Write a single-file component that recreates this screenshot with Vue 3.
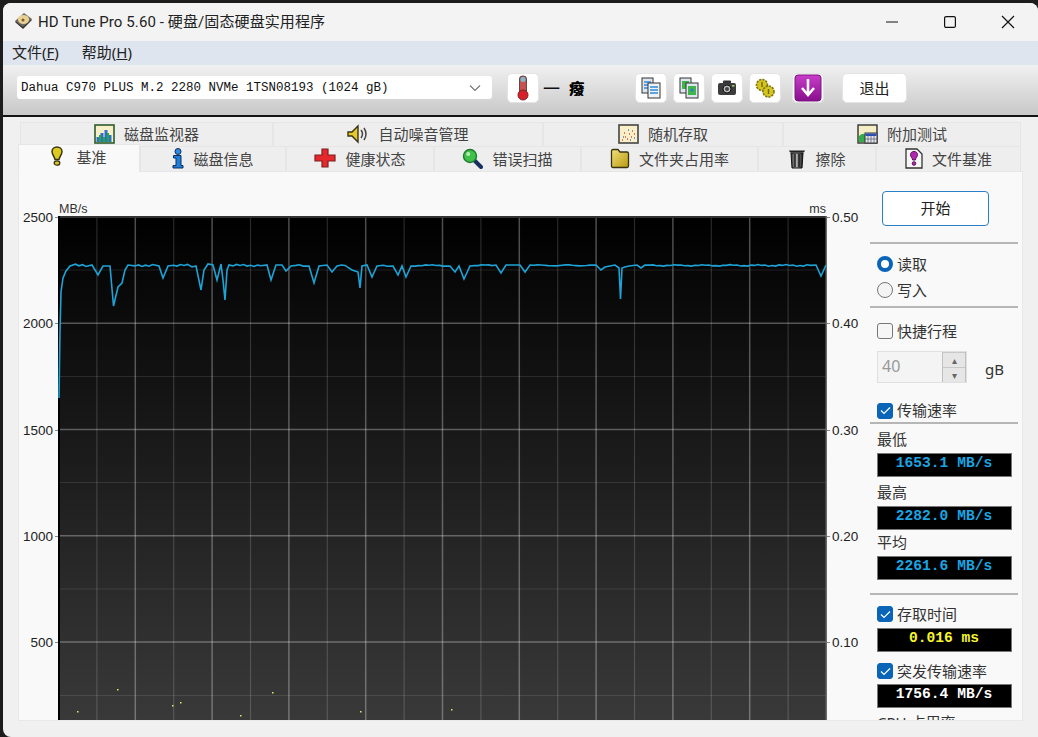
<script setup>
const hMajor = [217, 323.25, 429.5, 535.75, 642]
const hMinor = [270, 376.5, 482.5, 589, 695.5]
const vLines = []
for (let i = 1; i < 20; i++) {
  vLines.push({ x: 58.5 + i * 38.4, major: i % 2 === 0 })
}

// places where the read speed falls away from the flat line
const dips = [
  [59, 398], [60, 330], [61, 292], [63, 278], [66, 271], [70, 266],
  [92, 265], [98, 275], [103, 266], [110, 266], [113.5, 306], [118, 287], [122, 283], [125, 270], [128, 265],
  [159, 266], [163, 278], [168, 266],
  [192, 267], [196, 266], [201, 290], [204, 270], [208, 264], [213, 265], [217, 280], [221, 264], [223, 280], [225, 300], [227, 270], [229, 265],
  [267, 265], [271, 280], [276, 265], [282, 265], [286, 271], [291, 266],
  [309, 266], [314, 283], [319, 266], [327, 265], [332, 272], [337, 266],
  [352, 270], [355, 271], [358, 272], [360, 288], [362, 266], [367, 265], [372, 277], [377, 266],
  [393, 266], [398, 275], [402, 266], [406, 277], [411, 266],
  [450, 266], [455, 272], [459, 266], [464, 279], [470, 266],
  [496, 265], [501, 273], [506, 265], [520, 265], [525, 272], [530, 265],
  [596, 265], [601, 270], [605, 267], [615, 265], [619, 268], [620.5, 299], [622, 268], [625, 267], [629, 266], [637, 265], [641, 268], [645, 265],
  [816, 265], [821, 276], [826, 265]
]

function buildLine() {
  const pts = [...dips]
  for (let x = 72; x < 826; x += 3.5) {
    if (dips.some(d => Math.abs(d[0] - x) < 4)) continue
    const y = 265.4 + Math.sin(x * 0.9) * 0.8 + Math.sin(x * 0.23) * 0.5
    pts.push([x, +y.toFixed(1)])
  }
  pts.sort((a, b) => a[0] - b[0])
  return pts.map(p => p.join(',')).join(' ')
}
const speedLine = buildLine()

const dots = [[77, 711], [117, 689], [172, 705], [180, 702], [240, 715], [272, 692], [360, 711], [451, 709]]
const leftLabels = ['2500', '2000', '1500', '1000', '500']
const rightLabels = ['0.50', '0.40', '0.30', '0.20', '0.10']
</script>

<template>
  <div class="window">
    <div class="titlebar">
      <svg class="app-icon" width="19" height="18" viewBox="0 0 19 18">
        <polygon points="1,10 10,2 18,8 9,17" fill="#33312e" />
        <polygon points="1,9 10,1 18,7 9,15" fill="#6c6963" />
        <ellipse cx="9.5" cy="7.5" rx="5.6" ry="4.6" fill="#e8cf94" />
        <circle cx="9" cy="8" r="1.5" fill="#7a5c2c" />
      </svg>
      <span class="title-text">HD Tune Pro 5.60 - 硬盘/固态硬盘实用程序</span>
      <div class="win-controls">
        <span class="win-btn">
          <svg width="14" height="14" viewBox="0 0 14 14"><path d="M1 7h12" stroke="#111" stroke-width="1.2" /></svg>
        </span>
        <span class="win-btn">
          <svg width="14" height="14" viewBox="0 0 14 14"><rect x="1.6" y="1.6" width="10.8" height="10.8" rx="1.5" fill="none" stroke="#111" stroke-width="1.2" /></svg>
        </span>
        <span class="win-btn">
          <svg width="14" height="14" viewBox="0 0 14 14"><path d="M1 1l12 12M13 1L1 13" stroke="#111" stroke-width="1.2" /></svg>
        </span>
      </div>
    </div>

    <div class="menubar">
      <span class="menu-item">文件(<u>F</u>)</span>
      <span class="menu-item">帮助(<u>H</u>)</span>
    </div>

    <div class="toolbar">
      <div class="combo">
        <span class="combo-text">Dahua C970 PLUS M.2 2280 NVMe 1TSN08193 (1024 gB)</span>
        <svg width="12" height="8" viewBox="0 0 12 8"><path d="M1 1.5l5 5 5-5" fill="none" stroke="#777" stroke-width="1.2" /></svg>
      </div>
      <button class="tool-btn thermo">
        <svg width="18" height="26" viewBox="0 0 18 26">
          <rect x="5.500" y="1" width="7" height="18" rx="3" fill="#c9504e" stroke="#5c4a4a" />
          <rect x="6.500" y="2" width="5" height="5" rx="2" fill="#7fb8c8" />
          <circle cx="9" cy="20" r="5" fill="#d8202a" stroke="#7a2025" />
        </svg>
      </button>
      <span class="temp-dash">一</span>
      <span class="temp-glyph">癈</span>

      <button class="tool-btn first">
        <svg width="20" height="22" viewBox="0 0 20 22">
          <rect x="1" y="1" width="11" height="15" fill="#dfe6ee" stroke="#333" />
          <path d="M3 5h7M3 8h7M3 11h7" stroke="#2f8ad8" stroke-width="1.6" />
          <rect x="7" y="6" width="12" height="15" fill="#eef2f6" stroke="#333" />
          <path d="M9 10h8M9 13h8M9 16h8" stroke="#2f8ad8" stroke-width="1.6" />
        </svg>
      </button>
      <button class="tool-btn">
        <svg width="20" height="22" viewBox="0 0 20 22">
          <rect x="1" y="1" width="11" height="15" fill="#dfe6ee" stroke="#333" />
          <rect x="3" y="4" width="7" height="8" fill="#3fb54a" />
          <rect x="7" y="6" width="12" height="15" fill="#dfe6ee" stroke="#333" />
          <rect x="9" y="9" width="8" height="9" fill="#3fb54a" />
          <circle cx="13" cy="13" r="1.6" fill="#2f7ad8" />
        </svg>
      </button>
      <button class="tool-btn">
        <svg width="20" height="18" viewBox="0 0 20 18">
          <rect x="6" y="1.5" width="8" height="4" rx="1" fill="#333" />
          <rect x="1" y="4" width="18" height="12" rx="2" fill="#3c3c3c" />
          <circle cx="10" cy="10" r="4" fill="#bbb" stroke="#111" />
          <circle cx="10" cy="10" r="2" fill="#444" />
          <rect x="15" y="6" width="2.5" height="1.6" fill="#9ccf5f" />
        </svg>
      </button>
      <button class="tool-btn">
        <svg width="22" height="22" viewBox="0 0 22 22">
          <circle cx="8" cy="8" r="5.5" fill="#d6c51c" stroke="#7c7412" stroke-width="1.6" stroke-dasharray="2.2 1" />
          <circle cx="14.5" cy="14.5" r="5.5" fill="#d6c51c" stroke="#7c7412" stroke-width="1.6" stroke-dasharray="2.2 1" />
          <path d="M8 5v5M14.5 12v5" stroke="#6e6610" stroke-width="1.4" />
        </svg>
      </button>
      <button class="tool-btn save">
        <svg width="28" height="28" viewBox="0 0 28 28">
          <defs>
            <linearGradient id="purple" x1="0" y1="0" x2="0" y2="1">
              <stop offset="0" stop-color="#c93cc9" />
              <stop offset="1" stop-color="#86108c" />
            </linearGradient>
          </defs>
          <rect x="1" y="1" width="26" height="26" rx="3" fill="url(#purple)" stroke="#7a1280" />
          <path d="M14 5v15M8 14l6 7 6-7" fill="none" stroke="#fff" stroke-width="2.6" />
        </svg>
      </button>
      <button class="exit-btn">退出</button>
    </div>

    <div class="content">
      <div class="tabs-back">
        <div class="tab">
          <svg width="21" height="20" viewBox="0 0 21 20">
            <rect x="1" y="1" width="19" height="18" fill="#f7efc8" stroke="#2c5a2c" stroke-width="1.6" />
            <path d="M4 18v-5M8 18V9M12 18V6M16 18v-7" stroke="#2f6fd0" stroke-width="3" />
            <path d="M6 18v-7M10 18v-5M14 18V9" stroke="#28a838" stroke-width="2" />
          </svg>
          <span>磁盘监视器</span>
        </div>
        <div class="tab">
          <svg width="22" height="20" viewBox="0 0 22 20">
            <path d="M1 8h4l6-6v16l-6-6H1z" fill="#e8c92a" stroke="#3a3415" stroke-width="1.4" />
            <path d="M14 6q3 4 0 8M17 4q4 6 0 12" fill="none" stroke="#444" stroke-width="1.5" />
          </svg>
          <span>自动噪音管理</span>
        </div>
        <div class="tab">
          <svg width="21" height="20" viewBox="0 0 21 20">
            <rect x="1" y="1" width="19" height="18" fill="#f9efc9" stroke="#444" stroke-width="1.6" />
            <path d="M4 16h1M7 13h1M9 15h1M11 10h1M13 13h1M14 7h1M16 10h1M6 9h1" stroke="#d8503c" stroke-width="1.6" />
            <path d="M5 13h1M10 6h1M12 16h1M16 14h1" stroke="#3f7ad8" stroke-width="1.6" />
          </svg>
          <span>随机存取</span>
        </div>
        <div class="tab">
          <svg width="21" height="20" viewBox="0 0 21 20">
            <rect x="1" y="1" width="19" height="18" fill="#f5eec4" stroke="#333" stroke-width="1.4" />
            <path d="M2 18v-6q3-3 6-2v8z" fill="#2fae4a" />
            <rect x="8" y="9" width="12" height="10" fill="#e6e6f0" stroke="#333" />
            <rect x="8.5" y="9.5" width="11" height="2.5" fill="#2f4fb0" />
            <path d="M11 12v7M14 12v7M17 12v7M8 15h12" stroke="#667" stroke-width=".8" />
          </svg>
          <span>附加测试</span>
        </div>
      </div>

      <div class="tabs-front">
        <div class="tab active">
          <svg width="12" height="20" viewBox="0 0 12 20">
            <path d="M6 1c3 0 5 2 5 4.500 0 3-2.500 5-3 8H4c-.5-3-3-5-3-8C1 3 3 1 6 1z" fill="#dccb1e" stroke="#3a3615" stroke-width="1.500" />
            <ellipse cx="6" cy="17" rx="2.800" ry="2.200" fill="#dccb1e" stroke="#3a3615" stroke-width="1.300" />
          </svg>
          <span>基准</span>
        </div>
        <div class="tab">
          <svg width="12" height="21" viewBox="0 0 12 21">
            <circle cx="6" cy="3.500" r="3" fill="#2f8be0" stroke="#0c2f5c" />
            <path d="M1.500 7.500h7.500v10H11v2.500H1V17.500h3V10H1.500z" fill="#1f7fdc" stroke="#0c2f5c" />
          </svg>
          <span>磁盘信息</span>
        </div>
        <div class="tab">
          <svg width="22" height="20" viewBox="0 0 22 20">
            <path d="M8 1h6v6h7v6h-7v6H8v-6H1V7h7z" fill="#e4282c" stroke="#7c2020" stroke-width="1.200" />
          </svg>
          <span>健康状态</span>
        </div>
        <div class="tab">
          <svg width="21" height="21" viewBox="0 0 21 21">
            <path d="M12 12l7 7" stroke="#17305e" stroke-width="4" stroke-linecap="round" />
            <circle cx="8" cy="8" r="6.500" fill="#40c24a" stroke="#1f7a30" stroke-width="1.400" />
            <circle cx="6.200" cy="6" r="2" fill="#b6eeb6" />
          </svg>
          <span>错误扫描</span>
        </div>
        <div class="tab">
          <svg width="20" height="21" viewBox="0 0 20 21">
            <defs>
              <linearGradient id="folder" x1="0" y1="0" x2="1" y2="1">
                <stop offset="0" stop-color="#f2e07a" />
                <stop offset="1" stop-color="#b89a10" />
              </linearGradient>
            </defs>
            <path d="M1.500 6V3q0-1.500 1.500-1.500h5L10 4h7q1.500 0 1.500 1.500V18q0 1.500-1.500 1.500H3q-1.500 0-1.500-1.500z" fill="url(#folder)" stroke="#3a3210" stroke-width="1.300" />
          </svg>
          <span>文件夹占用率</span>
        </div>
        <div class="tab">
          <svg width="18" height="21" viewBox="0 0 18 21">
            <defs>
              <linearGradient id="bin" x1="0" y1="0" x2="1" y2="0">
                <stop offset="0" stop-color="#333" />
                <stop offset=".45" stop-color="#b0b0b0" />
                <stop offset="1" stop-color="#111" />
              </linearGradient>
            </defs>
            <path d="M1 2.500h16l-1 2H2z" fill="#222" />
            <path d="M3 5h12l-1 15H4z" fill="url(#bin)" stroke="#111" />
            <path d="M7 6v13M11 6v13" stroke="#111" stroke-width="1.300" />
          </svg>
          <span>擦除</span>
        </div>
        <div class="tab">
          <svg width="18" height="21" viewBox="0 0 18 21">
            <path d="M1 1h11l5 5v14H1z" fill="#f6f6f6" stroke="#333" stroke-width="1.300" />
            <path d="M9 3.500c2.200 0 3.500 1.300 3.500 3 0 2.200-1.800 3.500-2.200 5.500H7.700c-.4-2-2.200-3.300-2.200-5.500 0-1.700 1.300-3 3.500-3z" fill="#b028b0" stroke="#5c125c" />
            <circle cx="9" cy="15.500" r="1.800" fill="#b028b0" stroke="#5c125c" />
          </svg>
          <span>文件基准</span>
        </div>
      </div>

      <div class="panel">
        <div class="axis axis-left">
          <span v-for="l in leftLabels" :key="l" class="axis-label">{{ l }}</span>
        </div>

        <div class="chart-wrap">
          <div class="units">
            <span>MB/s</span>
            <span>ms</span>
          </div>
          <svg class="chart" width="769" height="504" viewBox="58 216 769 504">
            <defs>
              <linearGradient id="chartbg" x1="0" y1="0" x2="0" y2="1">
                <stop offset="0" stop-color="#000" />
                <stop offset="1" stop-color="#393939" />
              </linearGradient>
            </defs>
            <rect x="58" y="216" width="769" height="504" fill="url(#chartbg)" />
            <line v-for="y in hMinor" :key="y" x1="58" x2="827" :y1="y" :y2="y" stroke="#fff" stroke-opacity=".1" />
            <line v-for="y in hMajor" :key="y" x1="58" x2="827" :y1="y" :y2="y" stroke="#fff" stroke-opacity=".3" stroke-width="1.500" />
            <line
              v-for="v in vLines"
              :key="v.x"
              :x1="v.x"
              :x2="v.x"
              y1="216"
              y2="720"
              stroke="#fff"
              :stroke-opacity="v.major ? .3 : .16"
              :stroke-width="v.major ? 1.500 : 1.200"
            />
            <path d="M58 216.500H827" stroke="#333" stroke-width="3" />
            <path d="M59 216V720" stroke="#000" stroke-width="2" />
            <path d="M826.500 216V720" stroke="#6a6a6a" stroke-width="2" />
            <polyline :points="speedLine" fill="none" stroke="#1ea3d6" stroke-width="1.600" />
            <rect v-for="d in dots" :key="d[0]" :x="d[0]" :y="d[1]" width="1.500" height="1.500" fill="#e8e26a" />
          </svg>
        </div>

        <div class="axis axis-right">
          <span v-for="l in rightLabels" :key="l" class="axis-label">{{ l }}</span>
        </div>

        <div class="side">
          <button class="start-btn">开始</button>
          <div class="sep sep-start"></div>

          <div class="opt opt-read"><span class="radio on"></span>读取</div>
          <div class="opt"><span class="radio"></span>写入</div>
          <div class="sep sep-mode"></div>

          <div class="opt opt-short"><span class="check"></span>快捷行程</div>
          <div class="spin-row">
            <div class="spin">
              <span class="spin-value">40</span>
              <div class="spin-btns">
                <span class="spin-btn">▴</span>
                <span class="spin-btn">▾</span>
              </div>
            </div>
            <span class="spin-unit">gB</span>
          </div>

          <div class="opt opt-rate">
            <span class="check on"><svg width="11" height="9" viewBox="0 0 11 9"><path d="M1 4.500l3 3 6-6" fill="none" stroke="#fff" stroke-width="1.200" /></svg></span>传输速率
          </div>
          <div class="sep"></div>

          <div class="lbl">最低</div>
          <div class="lcd blue">1653.1 MB/s</div>
          <div class="lbl">最高</div>
          <div class="lcd blue">2282.0 MB/s</div>
          <div class="lbl lbl-short">平均</div>
          <div class="lcd blue">2261.6 MB/s</div>
          <div class="sep sep-avg"></div>

          <div class="opt opt-access">
            <span class="check on"><svg width="11" height="9" viewBox="0 0 11 9"><path d="M1 4.500l3 3 6-6" fill="none" stroke="#fff" stroke-width="1.200" /></svg></span>存取时间
          </div>
          <div class="lcd yellow">0.016 ms</div>
          <div class="opt opt-burst">
            <span class="check on"><svg width="11" height="9" viewBox="0 0 11 9"><path d="M1 4.500l3 3 6-6" fill="none" stroke="#fff" stroke-width="1.200" /></svg></span>突发传输速率
          </div>
          <div class="lcd white">1756.4 MB/s</div>
          <div class="lbl-cpu">CPU 占用率</div>
        </div>
      </div>
    </div>
  </div>
</template>

<style>
html, body {
  margin: 0;
  height: 737px;
  overflow: hidden;
  background: #1c1c1c;
}
</style>

<style scoped>
.window {
  box-sizing: border-box;
  width: 1035px;
  height: 734px;
  margin: 3px 0 0 3px;
  background: #f0f0f0;
  border-radius: 8px 8px 0 8px;
  overflow: hidden;
  font-family: "Noto Sans", "Noto Sans CJK SC", sans-serif;
  font-size: 15px;
  color: #333;
}

.titlebar {
  display: flex;
  align-items: center;
  height: 38px;
  padding-left: 11px;
  background: #f3f3f3;
  color: #222;
}
.app-icon { margin: 0 5px 3px 0; }
.title-text {
  margin-bottom: 3px;
  font-family: Roboto, "Noto Sans CJK SC", sans-serif;
  letter-spacing: .1px;
  white-space: nowrap;
}
.win-controls { display: flex; margin-left: auto; margin-right: 1px; }
.win-btn {
  display: flex;
  align-items: center;
  justify-content: center;
  width: 58px;
  height: 38px;
}

.menubar {
  box-sizing: border-box;
  display: flex;
  align-items: center;
  gap: 23px;
  height: 24px;
  padding: 0 0 3px 9px;
  background: #dfe5ee;
  color: #222;
}

.toolbar {
  box-sizing: border-box;
  display: flex;
  align-items: center;
  height: 52px;
  padding: 0 0 5px 14px;
  background: linear-gradient(#f1f1f1, #c8c8c8);
  border-bottom: 2px solid #141414;
}
.combo {
  box-sizing: border-box;
  display: flex;
  align-items: center;
  justify-content: space-between;
  width: 475px;
  height: 23px;
  padding: 1px 11px 0 4px;
  background: #fff;
  border-radius: 3px;
}
.combo-text {
  font-family: "Liberation Mono", monospace;
  font-size: 12.500px;
  color: #111;
  white-space: pre;
}
.tool-btn {
  display: flex;
  align-items: center;
  justify-content: center;
  box-sizing: border-box;
  width: 32px;
  height: 30px;
  margin: 0 0 0 6px;
  padding: 0;
  background: #fff;
  border: 1px solid #e4e4e4;
  border-radius: 5px;
}
.tool-btn.thermo { margin-left: 15px; }
.tool-btn.first { margin-left: 50px; }
.tool-btn.save { margin-left: 11px; }
.temp-dash { margin-left: 4px; width: 17px; color: #111; font-size: 17px; }
.temp-glyph { margin-left: 9px; width: 16px; font-weight: 700; color: #000; font-size: 15px; text-shadow: .6px 0 #000; }
.exit-btn {
  box-sizing: border-box;
  width: 65px;
  height: 30px;
  margin-left: 18px;
  padding: 0;
  background: #fff;
  border: 1px solid #e4e4e4;
  border-radius: 5px;
  font: inherit;
  color: #222;
}

.content { padding: 5px 0 0 15px; }
.tabs-back {
  display: grid;
  grid-template-columns: 253px 270px 240px 238px;
  height: 24px;
  margin-left: 2px;
}
.tabs-front {
  display: grid;
  grid-template-columns: 122px 146px 148px 147px 177px 118px 145px;
  height: 25px;
}
.tab {
  display: flex;
  align-items: center;
  justify-content: center;
  gap: 9px;
  box-sizing: border-box;
  padding-bottom: 2px;
  background: #eeeeee;
  border: 1px solid #e6e6e6;
  color: #444;
  white-space: nowrap;
}
.tab.active {
  position: relative;
  z-index: 1;
  height: 28px;
  margin-top: -2px;
  padding-bottom: 5px;
  gap: 13px;
  background: #f9f9f9;
  border-bottom: 0;
}

.panel {
  box-sizing: border-box;
  display: flex;
  width: 1005px;
  height: 550px;
  background: #f9f9f9;
  border: 1px solid #e8e8e8;
  border-top-color: #e4e4e4;
  overflow: hidden;
}

.axis {
  display: flex;
  flex-direction: column;
  padding-top: 37px;
  font-family: "Liberation Sans", sans-serif;
  font-size: 13.500px;
  color: #222;
}
.axis-left { width: 39px; align-items: flex-end; }
.axis-right { width: 43px; align-items: flex-start; }
.axis-label { display: flex; flex: none; height: 106.250px; line-height: 18px; }
.axis-left .axis-label::after,
.axis-right .axis-label::before {
  content: "";
  width: 3px;
  height: 1px;
  margin-top: 8px;
  background: #888;
}
.axis-left .axis-label::after { margin-left: 2px; }
.axis-right .axis-label::before { margin-right: 2px; }

.chart-wrap { display: flex; flex-direction: column; width: 769px; padding-top: 29px; }
.units {
  display: flex;
  justify-content: space-between;
  height: 15px;
  padding: 0 1px;
  font-family: "Liberation Sans", sans-serif;
  font-size: 12.500px;
  line-height: 16px;
  color: #333;
}
.chart { display: block; flex: none; }

.side {
  width: 148px;
  padding-top: 19px;
  flex: none;
}
.start-btn {
  display: block;
  box-sizing: border-box;
  width: 107px;
  height: 35px;
  margin: 0 0 0 12px;
  padding: 0 0 3px;
  background: #fff;
  border: 1.500px solid #2a7fc6;
  border-radius: 4px;
  font: inherit;
  color: #222;
}
.sep { height: 2px; background: #b6b6b6; }
.sep-start { margin-top: 16px; }
.sep-mode { margin-top: 3px; }
.sep-avg { margin-top: 13px; }

.opt {
  box-sizing: border-box;
  display: flex;
  align-items: center;
  gap: 4px;
  height: 26px;
  padding: 0 0 2px 7px;
  white-space: nowrap;
}
.opt-read { margin-top: 7px; }
.opt-short { margin-top: 10px; }
.opt-rate { margin-top: 16px; height: 23px; }
.opt-access { margin-top: 7px; height: 24px; margin-bottom: 2px; }
.opt-burst { margin-top: 7px; height: 24px; margin-bottom: 1px; }

.radio {
  box-sizing: border-box;
  width: 16px;
  height: 16px;
  margin-top: 2px;
  background: #f4f4f4;
  border: 1px solid #777;
  border-radius: 50%;
}
.radio.on { background: #fff; border: 4.500px solid #0a64b8; }
.check {
  box-sizing: border-box;
  display: flex;
  align-items: center;
  justify-content: center;
  width: 16px;
  height: 16px;
  margin-top: 2px;
  background: #f6f6f6;
  border: 1px solid #777;
  border-radius: 3px;
}
.check.on { background: #0a64b8; border-color: #0a64b8; }

.spin-row { display: flex; align-items: center; margin: 7px 0 0 7px; }
.spin {
  box-sizing: border-box;
  display: flex;
  width: 90px;
  height: 32px;
  background: #f4f4f4;
  border: 1px solid #e0e0e0;
}
.spin-value { flex: 1; padding-left: 4px; line-height: 28px; color: #999; font-size: 16px; }
.spin-btns { display: flex; flex-direction: column; width: 22px; border: 1px solid #c0c0c0; border-width: 0 1px 1px 1px; }
.spin-btn {
  flex: 1;
  text-align: center;
  background: #e6e6e6;
  border-top: 1px solid #c8c8c8;
  font-size: 10px;
  line-height: 14px;
  color: #666;
}
.spin-unit { margin: 4px 0 0 18px; font-size: 15px; }

.lbl { height: 29px; padding-left: 7px; line-height: 30px; }
.lbl-short { height: 26px; line-height: 24px; }
.lbl-cpu { margin-top: 2px; padding-left: 7px; line-height: 24px; white-space: nowrap; }

.lcd {
  box-sizing: border-box;
  width: 135px;
  height: 24px;
  margin-left: 7px;
  padding-right: 1px;
  background: #000;
  border: 1px solid #777;
  font-family: "Liberation Mono", monospace;
  font-size: 14.600px;
  font-weight: 700;
  line-height: 18px;
  text-align: center;
  white-space: pre;
}
.lcd.blue { color: #1ba5e2; }
.lcd.yellow { color: #f6f62e; }
.lcd.white { color: #fff; }
</style>
